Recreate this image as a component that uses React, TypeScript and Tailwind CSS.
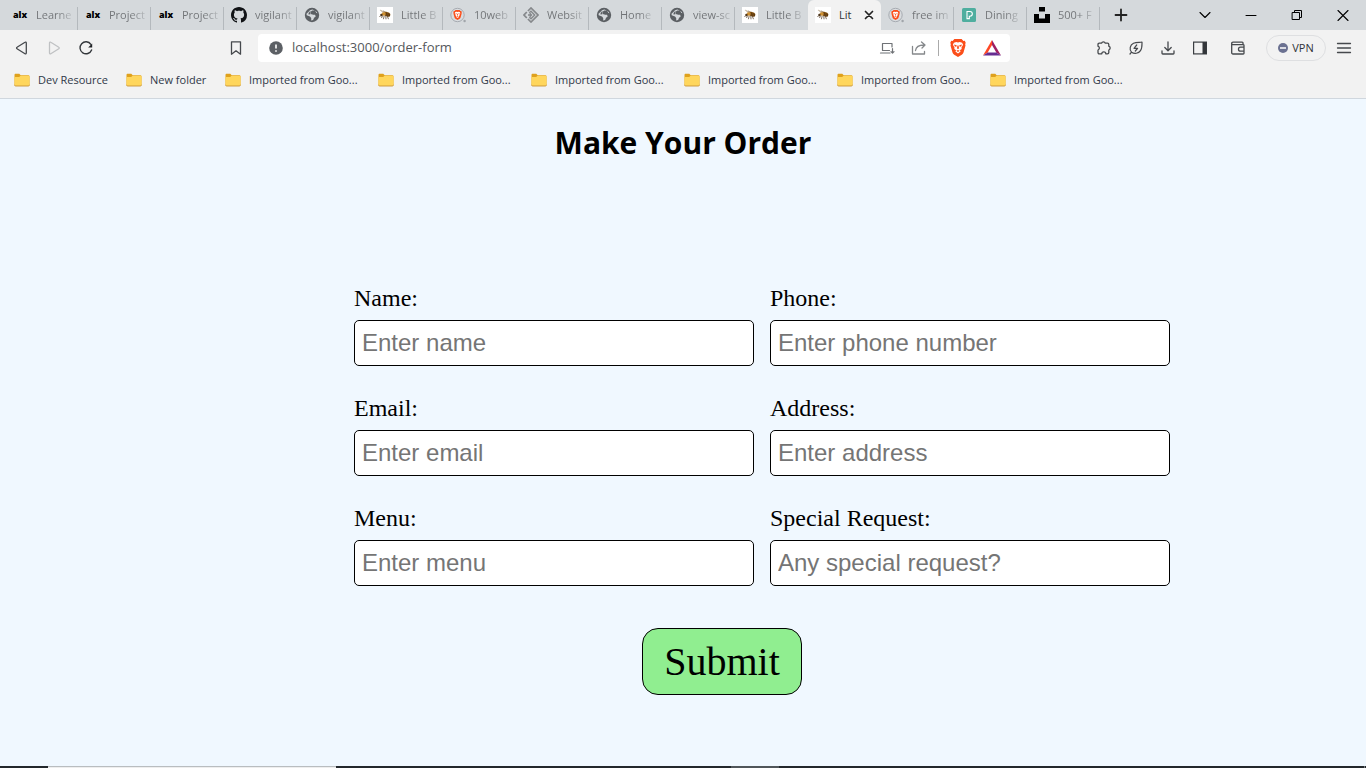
import React from "react";

type IconProps = { className?: string };

function AlxIcon() {
  return (
    <span className="flex h-4 w-4 items-center justify-center font-['Open_Sans',sans-serif] text-[9px] leading-4 font-extrabold text-black">
      alx
    </span>
  );
}

function GithubIcon() {
  return (
    <svg className="h-4 w-4" viewBox="0 0 16 16" fill="#111316">
      <path d="M8 0C3.58 0 0 3.58 0 8c0 3.54 2.29 6.53 5.47 7.59.4.07.55-.17.55-.38 0-.19-.01-.82-.01-1.49-2.01.37-2.53-.49-2.69-.94-.09-.23-.48-.94-.82-1.13-.28-.15-.68-.52-.01-.53.63-.01 1.08.58 1.23.82.72 1.21 1.87.87 2.33.66.07-.52.28-.87.51-1.07-1.78-.2-3.64-.89-3.64-3.95 0-.87.31-1.59.82-2.15-.08-.2-.36-1.02.08-2.12 0 0 .67-.21 2.2.82.64-.18 1.32-.27 2-.27s1.36.09 2 .27c1.53-1.04 2.2-.82 2.2-.82.44 1.1.16 1.92.08 2.12.51.56.82 1.27.82 2.15 0 3.07-1.87 3.75-3.65 3.95.29.25.54.73.54 1.48 0 1.07-.01 1.93-.01 2.2 0 .21.15.46.55.38A8.01 8.01 0 0 0 16 8c0-4.42-3.58-8-8-8Z" />
    </svg>
  );
}

function GlobeIcon() {
  return (
    <svg className="h-4 w-4" viewBox="0 0 16 16">
      <circle cx="8" cy="8" r="7.200" fill="#5b5f63" />
      <path d="M10.800 3.500H8.300L6.300 5l.4 2 2.600.8h1.800l.6 1.600-1.600 1.300-1 2.300-1.900.6v-2.700L6 9.400 2.700 8.300l-.2-1.500L4.400 5 6 3.200l2.300-.6 2.500.9Z" fill="#d5d9dc" />
      <path d="M4.600 6 6 4.300l.7-.5-.8 1.700.5 1.800L4.500 7.500Z" fill="#5b5f63" />
      <path d="M11.600 4.600l1.500 1.200" stroke="#d5d9dc" strokeWidth="1" />
    </svg>
  );
}

function BeeIcon() {
  return (
    <svg className="h-4 w-4" viewBox="0 0 16 16">
      <rect width="16" height="16" fill="#fff" />
      <path d="M6 6 2.600 3l1.200-.3L8 5.500Z" fill="#c4b5a0" />
      <path d="M7 5.700 5.600 3.200 9.300 5Z" fill="#a18a6c" />
      <ellipse cx="10.200" cy="7.300" rx="3.200" ry="2.200" transform="rotate(20 10.200 7.300)" fill="#8a5714" />
      <ellipse cx="6.800" cy="7" rx="2.200" ry="1.800" fill="#cf9030" />
      <path d="M9.300 5.600 9 9M11.200 6.100l-.5 3.400M12.600 7.200l-.5 2.400" stroke="#3a2410" strokeWidth=".7" />
      <circle cx="4.400" cy="8" r="1.200" fill="#4f361c" />
      <path d="M5.600 8.500 4.500 11M7.200 8.800l-.8 3.400M8.800 9l.2 3.300M10.300 9.200l1.200 3M3.600 8.800 2.400 10" stroke="#4a341e" strokeWidth=".7" fill="none" />
    </svg>
  );
}

function LionShape() {
  return (
    <>
      <path d="M5.400 1h7.200l1.800 1.900 1.400-.1.900 2-.5 1.500.300 1.100-2 7.200c-.3 1-.9 1.600-1.700 2.100L9 19l-3.800-2.300c-.8-.5-1.400-1.100-1.700-2.100l-2-7.200.3-1.100-.5-1.500.9-2 1.400.1Z" fill="#fb4e1a" />
      <path d="m9 4.400 1.700-.4 2.400.7 1 2-1.600 2.900.2 1.300-1.800 1.300.7 1.400L9 15.500l-2.600-1.900.7-1.400-1.800-1.300.2-1.300-1.600-2.900 1-2L7.300 4Z" fill="#fff" />
      <path d="m5 6.600 2.800.7-.5 1.500-1.500-.4ZM13 6.600l-2.800.700.5 1.500 1.500-.4ZM8.400 7.500h1.200l.4 2.800-1 1-1-1ZM7.300 12.800l1.700-.7 1.700.7L9 14Z" fill="#fb4e1a" />
    </>
  );
}

function BraveIcon() {
  return (
    <svg className="h-5 w-[18px]" viewBox="0 0 18 20">
      <LionShape />
    </svg>
  );
}

function BraveTabIcon() {
  return (
    <svg className="h-4 w-4" viewBox="0 0 16 16">
      <circle cx="7.500" cy="8" r="6.700" fill="#d9dcdf" stroke="#a6abb1" strokeWidth="1" />
      <g transform="translate(2.600 2.500) scale(.55)">
        <LionShape />
      </g>
      <circle cx="14.600" cy="14" r="1.200" fill="#a0a5aa" />
    </svg>
  );
}

function DiamondIcon() {
  return (
    <svg className="h-4 w-4" viewBox="0 0 16 16" fill="none" stroke="#85888b" strokeWidth="1.700">
      <path d="M4.900 4 8 1l7 7-7 7-3.100-3" />
      <path d="M3.800 5 1 8l2.800 3" />
      <path d="M6.300 5.800 8 4.200 11.700 8 8 11.700 6.300 10.200M5 8h3.500M6.800 6.300 8.500 8 6.800 9.700" strokeWidth="1.400" />
    </svg>
  );
}

function PexelsIcon() {
  return (
    <svg className="h-4 w-4" viewBox="0 0 16 16">
      <rect x="1" y="1" width="14" height="14" rx="1.500" fill="#4fae9f" />
      <path d="M6 4.500h3a2.300 2.300 0 0 1 0 4.700H8.300v2.400H6Z" fill="none" stroke="#fff" strokeWidth="1.100" />
    </svg>
  );
}

function UnsplashIcon() {
  return (
    <svg className="h-4 w-4" viewBox="0 0 16 16" fill="#000">
      <path d="M5 0h6v4.500H5ZM0 7h5v4.500h6V7h5v9H0Z" />
    </svg>
  );
}

function FolderIcon() {
  return (
    <svg className="h-4 w-4 shrink-0" viewBox="0 0 16 16">
      <path d="M0.500 3c0-.8.400-1.300 1.200-1.300h3.600L6.700 3.200H14c1 0 1.500.5 1.500 1.300V13H.5Z" fill="#dfa11d" />
      <path d="M.5 5h4.700l1.300-1.200h8c.7 0 1 .3 1 1v8c0 .7-.4 1.200-1.200 1.200H1.700c-.8 0-1.200-.5-1.200-1.200Z" fill="#ffd65c" />
      <path d="M.5 12.800c0 .7.400 1.200 1.200 1.200h12.600c.8 0 1.200-.5 1.200-1.200" fill="none" stroke="#c99434" strokeWidth=".9" />
    </svg>
  );
}

function Line({ d, className = "h-4 w-4", w = 1.3 }: IconProps & { d: string; w?: number }) {
  return (
    <svg className={className} viewBox="0 0 16 16" fill="none" stroke="currentColor" strokeWidth={w} strokeLinecap="round" strokeLinejoin="round">
      <path d={d} />
    </svg>
  );
}

function ReloadIcon() {
  return (
    <svg className="h-4 w-4" viewBox="0 0 16 16">
      <path d="M12.900 4.300A6 6 0 1 0 13.600 10" fill="none" stroke="#33373b" strokeWidth="1.400" strokeLinecap="round" />
      <path d="M14.200 3.400v4H10.200Z" fill="#202327" />
    </svg>
  );
}

function TriangleIcon() {
  return (
    <svg className="h-4 w-[18px]" viewBox="0 0 18 16">
      <path d="M9 0 0 15.500 4.700 12.500 9 5Z" fill="#ff4724" />
      <path d="M9 0l9 15.500L13.300 12.500 9 5Z" fill="#9e1f63" />
      <path d="M0 15.500h18L13.300 12.500H4.700Z" fill="#662d91" />
    </svg>
  );
}

function SidebarIcon() {
  return (
    <svg className="h-4 w-4" viewBox="0 0 16 16">
      <rect x="1.600" y="2.100" width="12.800" height="11.800" fill="none" stroke="#3b3e42" strokeWidth="1.200" />
      <path d="M10.500 2h4v12h-4Z" fill="#33363a" />
    </svg>
  );
}

type Tab = { label: string; icon: React.ReactNode; active?: boolean; plain?: boolean };

const tabs: Tab[] = [
  { label: "Learne", icon: <AlxIcon /> },
  { label: "Project", icon: <AlxIcon /> },
  { label: "Project", icon: <AlxIcon /> },
  { label: "vigilant", icon: <GithubIcon /> },
  { label: "vigilant", icon: <GlobeIcon /> },
  { label: "Little B", icon: <BeeIcon /> },
  { label: "10web", icon: <BraveTabIcon /> },
  { label: "Websit", icon: <DiamondIcon /> },
  { label: "Home", icon: <GlobeIcon /> },
  { label: "view-sc", icon: <GlobeIcon /> },
  { label: "Little B", icon: <BeeIcon />, plain: true },
  { label: "Lit", icon: <BeeIcon />, active: true },
  { label: "free im", icon: <BraveTabIcon /> },
  { label: "Dining", icon: <PexelsIcon /> },
  { label: "500+ F", icon: <UnsplashIcon /> },
];

function TabStrip() {
  return (
    <div className="flex h-[30px] items-stretch bg-[#d5d9dc] pl-[5px]">
      {tabs.map((tab, i) =>
        tab.active ? (
          <div key={i} className="flex w-[73px] items-center rounded-t-md bg-[#f2f2f2] pr-1 pl-[7px]">
            <span className="shrink-0">{tab.icon}</span>
            <span className="ml-2 flex-1 text-[11px] text-[#303336]">{tab.label}</span>
            <button aria-label="Close tab" className="flex h-4 w-4 items-center justify-center text-[#222]">
              <Line d="M4.500 4.500l7 7M11.500 4.500l-7 7" w={1.7} />
            </button>
          </div>
        ) : (
          <div key={i} className="flex w-[73px] items-end">
            <div
              className={
                tab.plain
                  ? "flex h-[23px] w-full items-center pb-[7px] pl-[7px]"
                  : "flex h-[23px] w-full items-center border-r border-[#b4b9bd] pb-[7px] pl-[7px]"
              }
            >
              <span className="shrink-0">{tab.icon}</span>
              <span className="ml-2 bg-linear-to-r from-[#707376] from-60% to-[#b9bdc0] bg-clip-text text-[11px] leading-4 whitespace-nowrap text-transparent">
                {tab.label}
              </span>
            </div>
          </div>
        ),
      )}
      <button aria-label="New tab" className="ml-[5px] flex w-8 items-center justify-center text-[#222]">
        <Line d="M8 2.500v11M2.500 8h11" w={1.8} />
      </button>
      <div className="ml-auto flex text-black">
        <button aria-label="Search tabs" className="flex w-[46px] items-center justify-center">
          <Line d="M3 5.500l5 5 5-5" w={1.1} />
        </button>
        <button aria-label="Minimize" className="flex w-[46px] items-center justify-center">
          <Line d="M3 8.500h10" w={1} />
        </button>
        <button aria-label="Restore" className="flex w-[46px] items-center justify-center">
          <Line d="M3.500 5.500h7v7h-7ZM5.500 5.500v-2h7v7h-2" w={1} />
        </button>
        <button aria-label="Close window" className="flex w-[46px] items-center justify-center">
          <Line d="M3 3.500l10 10M13 3.500l-10 10" w={1.1} />
        </button>
      </div>
    </div>
  );
}

function Toolbar() {
  return (
    <div className="flex h-9 items-center text-[#46494d]">
      <div className="flex w-[258px] items-center pl-[6px]">
        <button aria-label="Back" className="flex w-8 justify-center">
          <Line d="M12.300 2.900v10.200a.8.8 0 0 1-1.300.6L3 8.700a.8.8 0 0 1 0-1.400l8-5a.8.8 0 0 1 1.300.6Z" />
        </button>
        <button aria-label="Forward" className="flex w-8 justify-center text-[#bfc1c3]">
          <Line d="M3.500 2.900v10.200a.8.8 0 0 0 1.300.6l8-5a.8.8 0 0 0 0-1.400l-8-5a.8.8 0 0 0-1.300.6Z" />
        </button>
        <button aria-label="Reload" className="flex w-8 justify-center">
          <ReloadIcon />
        </button>
        <button aria-label="Bookmark this tab" className="mr-[6px] ml-auto flex w-8 justify-center">
          <Line d="M3.500 1.800h9v12.400L8 10.800l-4.500 3.400Z" />
        </button>
      </div>
      <div className="flex h-7 flex-1 items-center rounded bg-white pr-[2px] pl-[10px]">
        <svg className="h-4 w-4 shrink-0" viewBox="0 0 16 16">
          <circle cx="8" cy="8" r="6.800" fill="#5c6065" />
          <path d="M8 4.500v4M8 10.200v1.600" stroke="#fff" strokeWidth="1.600" />
        </svg>
        <input
          aria-label="Address"
          readOnly
          value="localhost:3000/order-form"
          className="ml-2 min-w-0 flex-1 bg-transparent text-[13px] text-[#55585c] outline-none"
        />
        <div className="flex items-center">
          <button aria-label="Install app" className="flex w-8 justify-center text-[#6f7276]">
            <Line d="M10.500 10.500H3.500V3.500H13v3.500M1.500 13h9.500M13.500 8.500V13M12 11.700l1.500 1.500 1.500-1.500" w={1.2} />
          </button>
          <button aria-label="Share" className="flex w-8 justify-center text-[#85888b]">
            <Line d="M1.500 6.500V14h12v-2.500M4.500 10.500c.5-3.500 3-5.500 8.500-5.500M10.500 2l3.500 3-3 3" />
          </button>
          <span className="mx-[3px] h-4 w-px bg-[#aaa]" />
          <button aria-label="Brave Shields" className="flex w-8 justify-center">
            <BraveIcon />
          </button>
          <button aria-label="Rewards" className="ml-[2px] flex w-8 justify-center">
            <TriangleIcon />
          </button>
        </div>
      </div>
      <div className="flex w-[356px] items-center justify-end pr-[6px]">
        <button aria-label="Extensions" className="flex w-8 justify-center">
          <Line d="M2 4.500c0-.8.500-1.300 1.300-1.300h2.200a2 2 0 0 1 3.800 0h2.200c.8 0 1.300.5 1.300 1.300v1.700a2 2 0 0 1 0 3.800v2.500c0 .8-.5 1.300-1.300 1.300H9.800a2 2 0 0 0-4 0H3.300c-.8 0-1.300-.5-1.300-1.300V10a2 2 0 0 0 0-3.800Z" />
        </button>
        <button aria-label="Energy saver" className="flex w-8 justify-center">
          <Line d="M2 14l1.500-1.800C1 9.500 2 5 5.500 3.300 8.500 2 11.500 2.500 14 2c0 3 .3 6-1.500 8.700-2 2.900-6 3.400-9 1.500M8.700 5 6 8.300h3.600L7.300 11" w={1.2} />
        </button>
        <button aria-label="Downloads" className="flex w-8 justify-center">
          <Line d="M8 2v8.500M4.800 7.500 8 10.700l3.200-3.200M2 10.800v2.400c0 .5.300.8.800.8h10.400c.5 0 .8-.3.800-.8v-2.400" />
        </button>
        <button aria-label="Sidebar" className="flex w-8 justify-center">
          <SidebarIcon />
        </button>
        <button aria-label="Wallet" className="ml-[6px] flex w-8 justify-center">
          <Line d="M13 4.500V3c0-.5-.3-.8-.8-.8H3c-.8 0-1.300.5-1.300 1.200S2.200 4.600 3 4.600h10.200c.5 0 .8.300.8.800v7.800c0 .5-.3.800-.8.800H3c-.8 0-1.300-.5-1.300-1.300V3.400M14 7.200h-3.500a2 2 0 0 0 0 4H14" />
        </button>
        <button className="ml-3 flex h-[26px] w-[60px] items-center justify-center gap-1 rounded-full border border-[#dedfe1] text-[11px] text-[#303338]">
          <svg className="h-[10px] w-[10px]" viewBox="0 0 10 10">
            <circle cx="5" cy="5" r="5" fill="#6b7191" />
            <path d="M2 5h6" stroke="#fff" strokeWidth="1.500" />
          </svg>
          VPN
        </button>
        <button aria-label="Menu" className="ml-[2px] flex w-8 justify-center">
          <Line d="M1.500 3.500h13M1.500 8h13M1.500 12.500h13" />
        </button>
      </div>
    </div>
  );
}

function BookmarksBar() {
  const imported = Array.from({ length: 6 }, () => "Imported from Goo...");
  return (
    <nav className="flex h-[33px] items-center border-b border-[#d0d7de] pb-1 pl-[14px] text-[11px] leading-4 whitespace-nowrap text-[#303848]">
      <a href="#dev" className="flex w-28 items-center gap-2">
        <FolderIcon />
        Dev Resource
      </a>
      <a href="#new" className="flex w-[99px] items-center gap-2">
        <FolderIcon />
        New folder
      </a>
      {imported.map((label, i) => (
        <a key={i} href="#imported" className="flex w-[153px] items-center gap-2">
          <FolderIcon />
          {label}
        </a>
      ))}
    </nav>
  );
}

const fields = [
  { id: "name", label: "Name:", placeholder: "Enter name", type: "text" },
  { id: "phone", label: "Phone:", placeholder: "Enter phone number", type: "tel" },
  { id: "email", label: "Email:", placeholder: "Enter email", type: "email" },
  { id: "address", label: "Address:", placeholder: "Enter address", type: "text" },
  { id: "menu", label: "Menu:", placeholder: "Enter menu", type: "text" },
  { id: "request", label: "Special Request:", placeholder: "Any special request?", type: "text" },
];

export default function App() {
  return (
    <div className="flex min-h-screen flex-col bg-[#f0f8ff] text-black">
      <header className="bg-[#f2f2f2] font-['Open_Sans','Noto_Sans',sans-serif]">
        <TabStrip />
        <Toolbar />
        <BookmarksBar />
      </header>

      <main className="flex-1">
        <h1 className="pt-6 text-center font-['Open_Sans','Noto_Sans',sans-serif] text-[30px] leading-10 font-bold">Make Your Order</h1>
        <form className="mt-[121px] ml-[354px]" onSubmit={(e) => e.preventDefault()}>
          <div className="grid max-w-[816px] grid-cols-2 gap-x-4 gap-y-7">
            {fields.map((f) => (
              <div key={f.id} className="flex flex-col gap-2">
                <label htmlFor={f.id} className="font-['Liberation_Serif',serif] text-[24px] leading-7">
                  {f.label}
                </label>
                <input
                  id={f.id}
                  type={f.type}
                  placeholder={f.placeholder}
                  className="h-[46px] w-full rounded-[5px] border border-black bg-white px-[7px] font-['Liberation_Sans',sans-serif] text-[24px] placeholder:text-[#757575]"
                />
              </div>
            ))}
          </div>
          <button
            type="submit"
            className="mt-[42px] ml-72 block h-[67px] w-40 rounded-2xl border border-black bg-[#90ee90] font-['Liberation_Serif',serif] text-[40px] leading-none"
          >
            Submit
          </button>
        </form>
      </main>

      <footer className="flex h-[2px] bg-[#23282c]">
        <span className="ml-12 w-72 border-t border-[#b9bdc0] bg-[#eeeeee]" />
        <span className="ml-[395px] w-12 bg-[#50565a]" />
        <span className="mr-px ml-auto w-px bg-[#73787c]" />
      </footer>
    </div>
  );
}
